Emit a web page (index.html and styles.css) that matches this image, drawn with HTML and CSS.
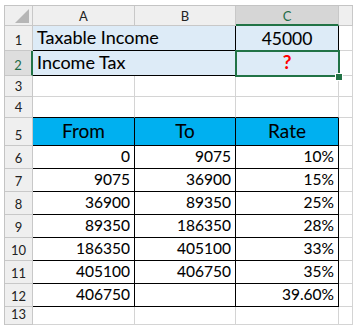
FILE: index.html
```html
<!DOCTYPE html>
<html>
<head>
<meta charset="utf-8">
<link rel="stylesheet" href="styles.css">
</head>
<body>
<div class="sheet">
  <div class="hd corner"><svg class="tri" width="14" height="14" viewBox="0 0 14 14"><polygon points="14,0 14,14 0,14" fill="#b6b6b6"/></svg></div>
  <div class="hd col">A</div>
  <div class="hd col">B</div>
  <div class="hd col col-sel">C</div>
  <div class="hd col"></div>

  <div class="hd row">1</div>
  <div class="cell fill span2 lbl b-bot b-right">Taxable Income</div>
  <div class="cell fill big center b-bot b-right">45000</div>
  <div class="cell"></div>

  <div class="hd row row-sel">2</div>
  <div class="cell fill span2 lbl b-bot b-right">Income Tax</div>
  <div class="cell fill center active"><span class="q">?</span><span class="selbox"></span><span class="handle"></span></div>
  <div class="cell"></div>

  <div class="hd row">3</div>
  <div class="cell"></div><div class="cell"></div><div class="cell"></div><div class="cell"></div>

  <div class="hd row">4</div>
  <div class="cell b-bot"></div><div class="cell b-bot"></div><div class="cell b-bot"></div><div class="cell"></div>

  <div class="hd row">5</div>
  <div class="cell th">From</div><div class="cell th">To</div><div class="cell th">Rate</div><div class="cell"></div>

  <div class="hd row">6</div>
  <div class="cell td">0</div><div class="cell td">9075</div><div class="cell td">10%</div><div class="cell"></div>

  <div class="hd row">7</div>
  <div class="cell td">9075</div><div class="cell td">36900</div><div class="cell td">15%</div><div class="cell"></div>

  <div class="hd row">8</div>
  <div class="cell td">36900</div><div class="cell td">89350</div><div class="cell td">25%</div><div class="cell"></div>

  <div class="hd row">9</div>
  <div class="cell td">89350</div><div class="cell td">186350</div><div class="cell td">28%</div><div class="cell"></div>

  <div class="hd row">10</div>
  <div class="cell td">186350</div><div class="cell td">405100</div><div class="cell td">33%</div><div class="cell"></div>

  <div class="hd row">11</div>
  <div class="cell td">405100</div><div class="cell td">406750</div><div class="cell td">35%</div><div class="cell"></div>

  <div class="hd row">12</div>
  <div class="cell td">406750</div><div class="cell td"></div><div class="cell td">39.60%</div><div class="cell"></div>

  <div class="hd row">13</div>
  <div class="cell"></div><div class="cell"></div><div class="cell"></div><div class="cell"></div>
</div>
</body>
</html>
```

FILE: styles.css
```css
html, body {
  margin: 0;
  padding: 0;
  background: #ffffff;
}

.sheet {
  margin: 5px 0 0 4px;
  display: grid;
  grid-template-columns: 28px 102px 101px 103px 14px;
  grid-template-rows: 20px 25px 25px 21px 21px 28px repeat(7, 23px) 18px;
  width: max-content;
  border-top: 1px solid #c4c4c4;
  border-left: 1px solid #c4c4c4;
  font-family: Lato, "Liberation Sans", sans-serif;
  color: #000000;
}

.hd,
.cell {
  box-sizing: border-box;
  border-right: 1px solid #d4d4d4;
  border-bottom: 1px solid #d4d4d4;
  display: flex;
  min-width: 0;
}

.hd {
  background: #efefef;
  border-color: #c8c8c8;
  font-size: 13px;
  color: #222222;
  justify-content: center;
}

.corner {
  align-items: flex-end;
  justify-content: flex-end;
  padding: 0 3px 2px 0;
}

.tri {
  display: block;
}

.col {
  align-items: center;
  padding-top: 1px;
}

.row {
  align-items: flex-end;
  padding-bottom: 3px;
  line-height: 1;
}

.col-sel {
  background: #d6d6d6;
  color: #1e6b47;
  border-bottom: 2px solid #217346;
}

.row-sel {
  background: #dedede;
  color: #1e6b47;
  border-right: 2px solid #217346;
}

.cell {
  align-items: flex-end;
  line-height: 1.2;
  white-space: nowrap;
  -webkit-text-stroke: 0.08px #000000;
}

.span2 {
  grid-column: span 2;
}

.fill {
  background: #ddebf7;
}

.lbl {
  font-size: 18px;
  padding: 0 0 1px 4px;
}

.big {
  font-size: 17.5px;
  padding-bottom: 1px;
}

.center {
  justify-content: center;
}

.b-bot {
  border-bottom-color: #000000;
}

.b-right {
  border-right-color: #000000;
}

.active {
  position: relative;
  padding-bottom: 1px;
}

.q {
  color: #ff0000;
  -webkit-text-stroke: 0;
  font-weight: 700;
  font-size: 19px;
  line-height: 1.2;
}

.selbox {
  position: absolute;
  left: -1px;
  top: -1px;
  width: 105px;
  height: 27px;
  box-sizing: border-box;
  border: 2px solid #217346;
  z-index: 2;
}

.handle {
  position: absolute;
  left: 99px;
  top: 22px;
  width: 8px;
  height: 8px;
  box-sizing: border-box;
  background: #217346;
  border: 1px solid #ffffff;
  z-index: 3;
}

.th {
  background: #00b0f0;
  border-right-color: #000000;
  border-bottom-color: #000000;
  justify-content: center;
  font-size: 19px;
  padding-bottom: 2px;
}

.td {
  border-right-color: #000000;
  border-bottom-color: #000000;
  justify-content: flex-end;
  font-size: 15.5px;
  padding: 0 4px 2px 0;
}
```
